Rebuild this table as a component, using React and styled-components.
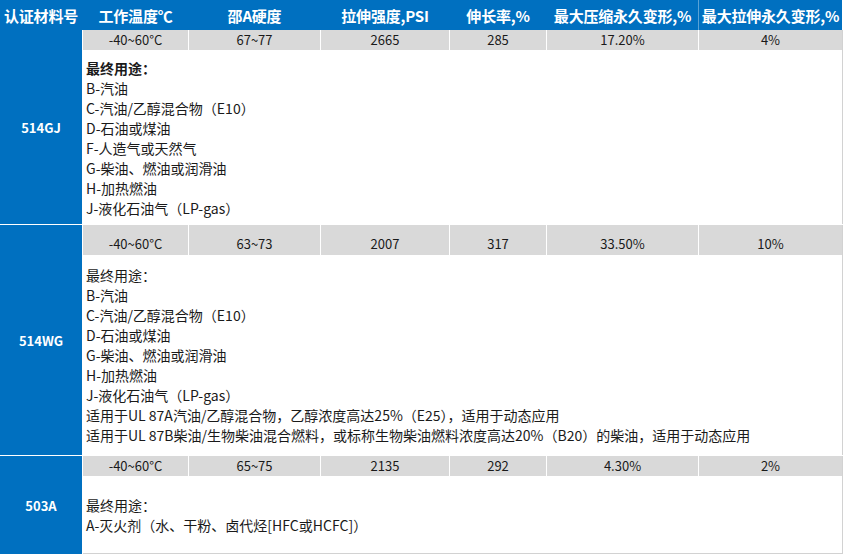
import React from "react";
import styled, { createGlobalStyle } from "styled-components";

const Global = createGlobalStyle`
  html, body { margin: 0; padding: 0; background: #ffffff; }
  body { font-family: "Noto Sans CJK SC", "Liberation Sans", sans-serif; color: #1a1a1a; }
`;

const COLS = "82px 105px 131px 128px 96px 151px 143px";
const BLUE = "#0070c0";

const Table = styled.div`
  width: 843px;
  display: flex;
  flex-direction: column;
`;

const HeaderRow = styled.div`
  display: grid;
  grid-template-columns: ${COLS};
  column-gap: 1px;
  width: 842px;
  height: 30px;
  background: ${BLUE};
`;

const HeadCell = styled.div`
  display: flex;
  align-items: center;
  justify-content: center;
  color: #ffffff;
  font-weight: 700;
  font-size: 15px;
  white-space: nowrap;
  letter-spacing: -0.2px;
  border-left: ${(p) => (p.$divider ? "1px solid rgba(255,255,255,0.35)" : "none")};
  margin-left: ${(p) => (p.$divider ? "-1px" : "0")};
`;

const Group = styled.div`
  display: grid;
  grid-template-columns: ${COLS};
  grid-template-rows: ${(p) => p.$rowH}px ${(p) => p.$textH}px;
  column-gap: 1px;
  width: 842px;
  border-right: 1px solid #d2d2d2;
  margin-top: ${(p) => (p.$first ? "0" : "1px")};
`;

const Label = styled.div`
  grid-row: 1 / span 2;
  grid-column: 1;
  background: ${BLUE};
  color: #ffffff;
  font-weight: 700;
  font-size: 13px;
  display: flex;
  align-items: center;
  justify-content: center;
`;

const DataCell = styled.div`
  background: #d9d9d9;
  font-size: 13px;
  line-height: 20px;
  display: flex;
  justify-content: center;
  align-items: ${(p) => (p.$bottom ? "flex-end" : "center")};
  padding-bottom: ${(p) => (p.$bottom ? "1px" : "0")};
  box-sizing: border-box;
`;

const Uses = styled.div`
  grid-column: 2 / span 6;
  grid-row: 2;
  display: flex;
  flex-direction: column;
  justify-content: ${(p) => (p.$center ? "center" : "flex-start")};
  padding: ${(p) => p.$pad};
  box-sizing: border-box;
  font-size: 14px;
  line-height: 20px;
  border-bottom: ${(p) => (p.$last ? "1px solid #d2d2d2" : "none")};
`;

const Line = styled.div`
  white-space: nowrap;
  font-weight: ${(p) => (p.$bold ? 700 : 400)};
`;

const headers = [
  "认证材料号",
  "工作温度℃",
  "邵A硬度",
  "拉伸强度,PSI",
  "伸长率,%",
  "最大压缩永久变形,%",
  "最大拉伸永久变形,%",
];

const groups = [
  {
    label: "514GJ",
    values: ["-40~60°C", "67~77", "2665", "285", "17.20%", "4%"],
    rowH: 20,
    textH: 174,
    pad: "8px 3px 6px",
    boldTitle: true,
    lines: [
      "最终用途：",
      "B-汽油",
      "C-汽油/乙醇混合物（E10）",
      "D-石油或煤油",
      "F-人造气或天然气",
      "G-柴油、燃油或润滑油",
      "H-加热燃油",
      "J-液化石油气（LP-gas）",
    ],
  },
  {
    label: "514WG",
    values: ["-40~60°C", "63~73", "2007", "317", "33.50%", "10%"],
    rowH: 30,
    bottom: true,
    textH: 200,
    pad: "10px 3px",
    lines: [
      "最终用途：",
      "B-汽油",
      "C-汽油/乙醇混合物（E10）",
      "D-石油或煤油",
      "G-柴油、燃油或润滑油",
      "H-加热燃油",
      "J-液化石油气（LP-gas）",
      "适用于UL 87A汽油/乙醇混合物，乙醇浓度高达25%（E25），适用于动态应用",
      "适用于UL 87B柴油/生物柴油混合燃料，或标称生物柴油燃料浓度高达20%（B20）的柴油，适用于动态应用",
    ],
  },
  {
    label: "503A",
    values: ["-40~60°C", "65~75", "2135", "292", "4.30%", "2%"],
    rowH: 20,
    textH: 78,
    pad: "0 3px",
    center: true,
    last: true,
    lines: ["最终用途：", "A-灭火剂（水、干粉、卤代烃[HFC或HCFC]）"],
  },
];

export default function App() {
  return (
    <>
      <Global />
      <Table>
        <HeaderRow>
          {headers.map((h, i) => (
            <HeadCell key={h} $divider={i === 6}>
              {h}
            </HeadCell>
          ))}
        </HeaderRow>
        {groups.map((g, gi) => (
          <Group key={g.label} $rowH={g.rowH} $textH={g.textH} $first={gi === 0}>
            <Label>{g.label}</Label>
            {g.values.map((v, i) => (
              <DataCell key={i} $bottom={g.bottom}>
                {v}
              </DataCell>
            ))}
            <Uses $pad={g.pad} $center={g.center} $last={g.last}>
              {g.lines.map((l, i) => (
                <Line key={i} $bold={g.boldTitle && i === 0}>
                  {l}
                </Line>
              ))}
            </Uses>
          </Group>
        ))}
      </Table>
    </>
  );
}
